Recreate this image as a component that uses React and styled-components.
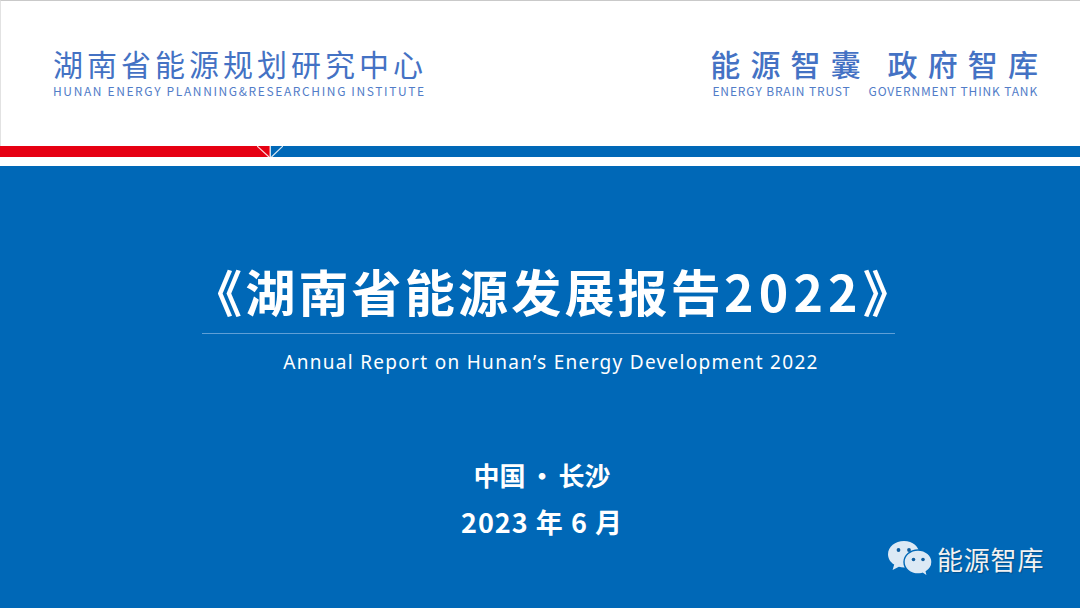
import React from "react";
import styled, { createGlobalStyle } from "styled-components";

const CJK = `"Noto Sans CJK SC", "Noto Sans", sans-serif`;

const GlobalStyle = createGlobalStyle`
  html, body {
    margin: 0;
    padding: 0;
    width: 1080px;
    height: 608px;
    overflow: hidden;
    background: #fff;
  }
`;

const Page = styled.div`
  position: relative;
  width: 1080px;
  height: 608px;
  display: flex;
  flex-direction: column;
  font-family: ${CJK};
`;

const Header = styled.header`
  box-sizing: border-box;
  height: 146px;
  padding: 44px 42px 0 52px;
  display: flex;
  justify-content: space-between;
  border-top: 1px solid #c9c9c9;
  border-left: 1px solid #e2e2e2;
  color: #4472c4;
`;

const Brand = styled.div`
  display: flex;
  flex-direction: column;
  align-items: ${(p) => (p.$right ? "flex-end" : "flex-start")};
`;

const BrandTitle = styled.div`
  font-size: 30px;
  line-height: 36px;
  font-weight: ${(p) => (p.$right ? 500 : 400)};
  letter-spacing: ${(p) => (p.$right ? "10.1px" : "4px")};
  white-space: pre;
  margin-right: ${(p) => (p.$right ? "-10px" : "0")};
`;

const BrandSub = styled.div`
  display: flex;
  gap: 18px;
  margin-top: 3px;
  font-size: 12px;
  line-height: 14px;
  letter-spacing: ${(p) => (p.$right ? "0.85px" : "1.62px")};
  white-space: nowrap;
  opacity: 0.92;
`;

const Stripe = styled.div`
  display: flex;
  height: 11px;
`;

const StripeRed = styled.div`
  width: 257px;
  background: #e60012;
`;

const StripeBlue = styled.div`
  flex: 1;
  background: #0068b7;
`;

const Gap = styled.div`
  height: 9px;
`;

const Main = styled.main`
  flex: 1;
  background: #0068b7;
  color: #fff;
  display: flex;
  flex-direction: column;
  align-items: center;
`;

const Title = styled.h1`
  margin: 91px 0 0 28px;
  font-size: 50px;
  line-height: 66px;
  font-weight: 700;
  letter-spacing: 3.2px;
  white-space: nowrap;
`;

const TitleYear = styled.span`
  letter-spacing: 5.2px;
`;

const Rule = styled.div`
  width: 693px;
  height: 1px;
  margin: 10px 0 0 17px;
  background: #5f9fd6;
`;

const Subtitle = styled.div`
  margin: 15px 0 0 22px;
  font-family: "Noto Sans", sans-serif;
  font-size: 19px;
  line-height: 26px;
  letter-spacing: 1.3px;
  white-space: nowrap;
`;

const Place = styled.div`
  margin: ${(p) => p.$top}px 0 0 4px;
  font-size: ${(p) => p.$size}px;
  line-height: 36px;
  font-weight: 700;
  letter-spacing: ${(p) => (p.$size > 26 ? "1px" : "0")};
  word-spacing: ${(p) => (p.$size > 26 ? "0" : "-2.5px")};
  white-space: pre;
`;

const Badge = styled.div`
  position: absolute;
  left: 888px;
  bottom: 30px;
  display: flex;
  align-items: center;
  gap: 5px;
  color: #f2f2f2;
  font-size: 26px;
  line-height: 38px;
  letter-spacing: 0.8px;
  text-shadow: 1px 1px 1px rgba(0, 0, 0, 0.25);
`;

const StripeNotch = () => (
  <svg width="26" height="11" viewBox="0 0 26 11" style={{ display: "block" }}>
    <rect width="13" height="11" fill="#e60012" />
    <rect x="13" width="13" height="11" fill="#0068b7" />
    <path d="M0 0 L12 11 M26 0 L14.5 11" stroke="#fff" strokeWidth="1.2" fill="none" opacity="0.85" />
    <path d="M13.2 0 V11" stroke="#fff" strokeWidth="1.2" />
  </svg>
);

const WechatIcon = () => (
  <svg width="44" height="37" viewBox="0 0 44 37">
    <path
      d="M16 0C7.2 0 0 5.9 0 13.2c0 4.3 2.4 8 6.2 10.4L4.6 29l6.3-3.2c1.6.4 3.3.6 5.1.6 8.8 0 15.4-5.9 15.4-13.2S24.8 0 16 0z"
      fill="#dce9f5"
    />
    <circle cx="10.5" cy="9" r="1.9" fill="#0f5c9e" />
    <circle cx="21" cy="9" r="1.9" fill="#0f5c9e" />
    <path
      d="M30 9c-7.8 0-14 5.4-14 12s6.2 12 14 12c1.6 0 3.1-.2 4.5-.7l5 3.2-1.2-4.9C41.7 28.4 44 25 44 21c0-6.6-6.2-12-14-12z"
      fill="#dce9f5"
      stroke="#0068b7"
      strokeWidth="1.4"
    />
    <circle cx="25.5" cy="18.5" r="1.8" fill="#0f5c9e" />
    <circle cx="35" cy="18.5" r="1.8" fill="#0f5c9e" />
  </svg>
);

export default function App() {
  return (
    <Page>
      <GlobalStyle />
      <Header>
        <Brand>
          <BrandTitle>湖南省能源规划研究中心</BrandTitle>
          <BrandSub>HUNAN ENERGY PLANNING&amp;RESEARCHING INSTITUTE</BrandSub>
        </Brand>
        <Brand $right>
          <BrandTitle $right>{"能源智囊 政府智库"}</BrandTitle>
          <BrandSub $right>
            <span>ENERGY BRAIN TRUST</span>
            <span>GOVERNMENT THINK TANK</span>
          </BrandSub>
        </Brand>
      </Header>
      <Stripe>
        <StripeRed />
        <StripeNotch />
        <StripeBlue />
      </Stripe>
      <Gap />
      <Main>
        <Title>
          《湖南省能源发展报告<TitleYear>2022</TitleYear>》
        </Title>
        <Rule />
        <Subtitle>Annual Report on Hunan’s Energy Development 2022</Subtitle>
        <Place $top={82} $size={26}>{"中国 • 长沙"}</Place>
        <Place $top={11} $size={27}>{"2023 年 6 月"}</Place>
      </Main>
      <Badge>
        <WechatIcon />
        能源智库
      </Badge>
    </Page>
  );
}
